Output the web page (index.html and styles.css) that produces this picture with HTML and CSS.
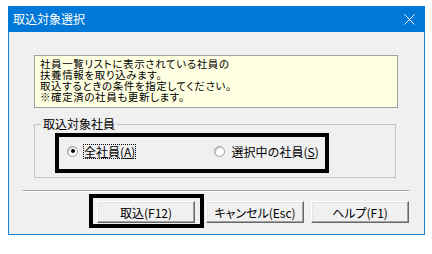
FILE: index.html
```html
<!DOCTYPE html>
<html lang="ja">
<head>
    <meta charset="UTF-8">
    <title>取込対象選択</title>
    <link rel="stylesheet" href="styles.css">
</head>
<body>
    <div class="dialog">
        <!-- Title bar -->
        <div class="titlebar">
            <span class="title">取込対象選択</span>
            <svg class="close" width="11" height="11" viewBox="0 0 11 11">
                <path d="M0.5 0.5 L10.5 10.5 M10.5 0.5 L0.5 10.5" stroke="#fff" stroke-width="1" fill="none"/>
            </svg>
        </div>

        <div class="body">
            <!-- Info message -->
            <div class="info">
                <div>社員一覧リストに表示されている社員の</div>
                <div>扶養情報を取り込みます。</div>
                <div>取込するときの条件を指定してください。</div>
                <div>※確定済の社員も更新します。</div>
            </div>

            <!-- Target group -->
            <fieldset class="group">
                <legend>取込対象社員</legend>
                <div class="mark radios">
                    <label class="radio">
                        <span class="dot checked"></span>
                        <span class="focus">全社員(<u>A</u>)</span>
                    </label>
                    <label class="radio second">
                        <span class="dot"></span>
                        <span>選択中の社員(<u>S</u>)</span>
                    </label>
                </div>
            </fieldset>

            <div class="separator"></div>

            <!-- Buttons -->
            <div class="buttons">
                <div class="mark btn-mark">
                    <button type="button">取込(F12)</button>
                </div>
                <button type="button" class="plain">キャンセル(Esc)</button>
                <button type="button" class="plain">ヘルプ(F1)</button>
            </div>
        </div>
    </div>
</body>
</html>
```

FILE: styles.css
```css
/* General */
body {
    margin: 0;
    padding: 6px 0 0 8px;
    background-color: #ffffff;
    font-family: "Noto Sans CJK JP", "Noto Sans", sans-serif;
    font-size: 12px;
    color: #000;
}

.dialog {
    width: 417px;
}

/* Title bar */
.titlebar {
    height: 26px;
    background-color: #0078d7;
    color: #fff;
    display: flex;
    align-items: center;
    justify-content: space-between;
    padding: 0 10px 0 5px;
}

.title {
    font-size: 12px;
    line-height: 14px;
}

.close {
    margin-top: 1px;
}

/* Body */
.body {
    background-color: #f0f0f0;
    border: 1px solid #1883d7;
    border-top: none;
    padding: 23px 0 6px 0;
}

.info {
    margin-left: 25px;
    width: 364px;
    height: 53px;
    box-sizing: border-box;
    background-color: #ffffe1;
    border: 1px solid #a0a0a0;
    padding: 2px 0 0 5px;
    font-size: 10.5px;
    line-height: 11px;
    letter-spacing: 0.6px;
    font-feature-settings: "palt";
}

.info div {
    height: 11px;
}

/* Group box */
.group {
    margin: 10px 0 0 25px;
    width: 362px;
    box-sizing: border-box;
    border: 1px solid #c4c4c4;
    padding: 0 0 4px 0;
}

.group legend {
    margin-left: 6px;
    padding: 0 2px;
    line-height: 12px;
    font-feature-settings: "palt";
}

.mark {
    border: 4px solid #000;
    box-sizing: border-box;
}

.radios {
    margin: 3px 0 0 20px;
    width: 274px;
    height: 40px;
    display: flex;
    align-items: center;
    padding-left: 8px;
    padding-bottom: 4px;
}

.radio {
    display: flex;
    align-items: center;
    gap: 6px;
    line-height: 13px;
}

.radio.second {
    margin-left: 79px;
}

.dot {
    width: 11px;
    height: 11px;
    box-sizing: border-box;
    border-radius: 50%;
    background-color: #fff;
    border: 1px solid #9a9a9a;
    box-shadow: inset 1px 1px 0 #c8c8c8;
    display: flex;
    align-items: center;
    justify-content: center;
}

.dot.checked::after {
    content: "";
    width: 4px;
    height: 4px;
    border-radius: 50%;
    background-color: #000;
}

.focus {
    outline: 1px dotted #000;
    outline-offset: 0;
}

/* Separator */
.separator {
    margin: 12px 0 0 14px;
    width: 386px;
    border-top: 1px solid #a0a0a0;
    border-bottom: 1px solid #fff;
}

/* Buttons */
.buttons {
    display: flex;
    align-items: flex-start;
    margin: 2px 0 0 80px;
}

.btn-mark {
    width: 115px;
    height: 34px;
    padding: 3px 5px 1px 4px;
}

button {
    width: 98px;
    height: 22px;
    padding: 0;
    font-family: inherit;
    font-size: 12px;
    background-color: #f0f0f0;
    border: 1px solid;
    border-color: #fff #696969 #696969 #fff;
    box-shadow: inset -1px -1px 0 #a0a0a0, inset 1px 1px 0 #e3e3e3;
    font-feature-settings: "palt";
}

.plain {
    margin-top: 7px;
}

.plain:first-of-type {
    margin-left: 2px;
}

.plain + .plain {
    margin-left: 7px;
}
```
